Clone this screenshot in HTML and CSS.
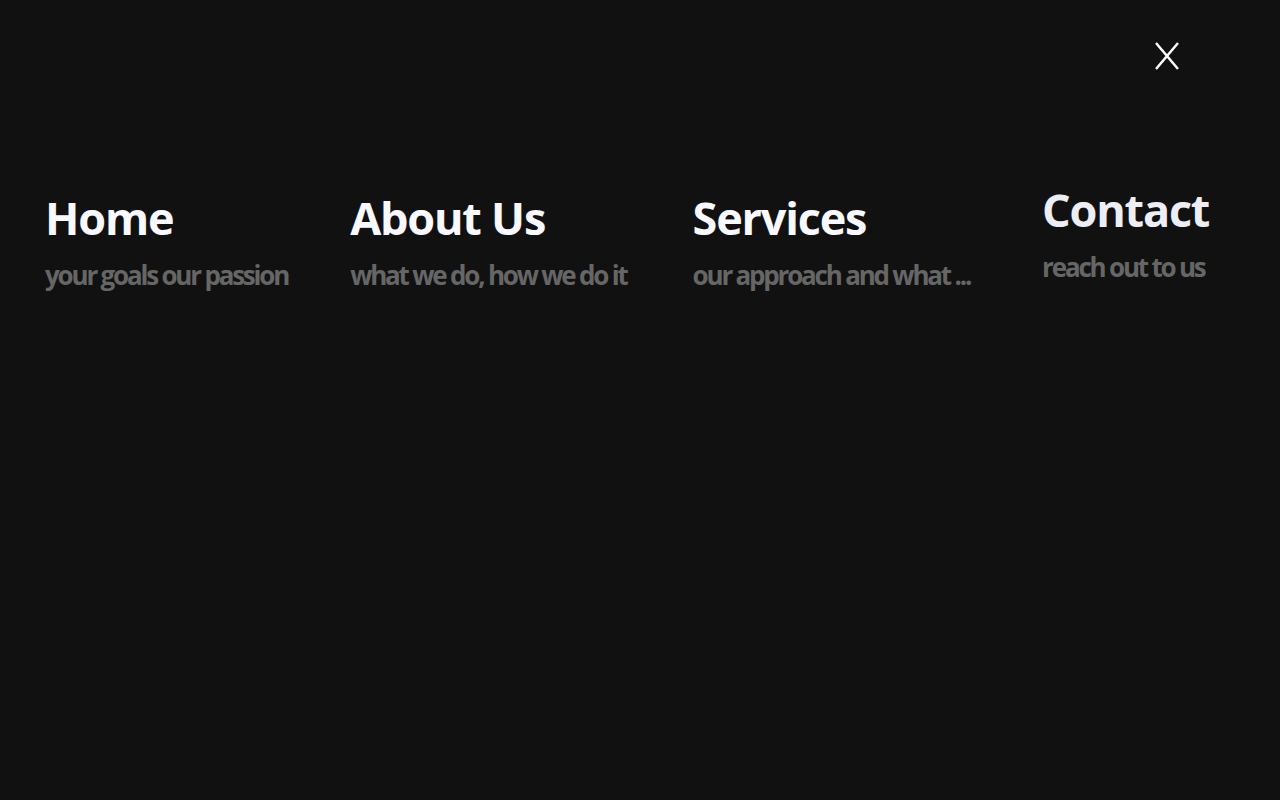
FILE: index.html
```html
<!DOCTYPE html>
<html lang="en">
<head>
<meta charset="utf-8">
<title>Menu</title>
<link rel="stylesheet" href="styles.css">
</head>
<body>
<div class="overlay">
  <div class="topbar">
    <button class="close" aria-label="Close menu">
      <svg width="26" height="30" viewBox="0 0 26 30"><path d="M2 2 L24 28 M24 2 L2 28" stroke="#fff" stroke-width="2.5" fill="none"/></svg>
    </button>
  </div>
  <nav class="menu">
    <a class="item" href="#"><span class="title">Home</span><span class="sub">your goals our passion</span></a>
    <a class="item about" href="#"><span class="title">About Us</span><span class="sub">what we do, how we do it</span></a>
    <a class="item services" href="#"><span class="title">Services</span><span class="sub">our approach and what ...</span></a>
    <a class="item active" href="#"><span class="title">Contact</span><span class="sub">reach out to us</span></a>
  </nav>
</div>
</body>
</html>
```

FILE: styles.css
```css
html, body {
  margin: 0;
  padding: 0;
  background: #111111;
  height: 100%;
}
body {
  font-family: "Open Sans", "Noto Sans", sans-serif;
}
.overlay {
  min-height: 800px;
  box-sizing: border-box;
}
.topbar {
  display: flex;
  justify-content: flex-end;
  padding: 41px 100px 0 0;
}
.close {
  background: none;
  border: 0;
  padding: 0;
  width: 26px;
  height: 30px;
  cursor: pointer;
  display: block;
}
.close svg { display: block; }
.menu {
  display: flex;
  gap: 62px;
  padding: 118px 0 0 45px;
}
.item {
  display: flex;
  flex-direction: column;
  text-decoration: none;
}
.title {
  font-size: 45px;
  font-weight: 700;
  color: #f8f8ff;
  line-height: 58px;
  letter-spacing: -1.2px;
}
.sub {
  margin-top: 10px;
  font-size: 26px;
  font-weight: 700;
  color: #666666;
  letter-spacing: -2.2px;
  line-height: 36px;
}
.about .sub { margin-right: 4px; }
.services .sub { margin-right: 10px; }
.active { transform: translateY(-8px); }
.active .title { color: #ededf5; }
```
